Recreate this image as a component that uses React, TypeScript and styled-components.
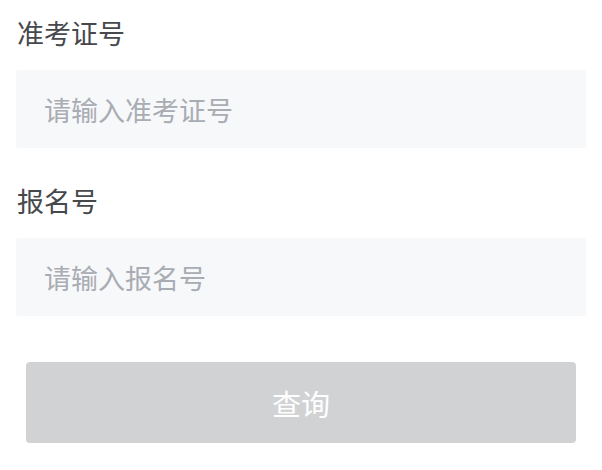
import styled, { createGlobalStyle } from "styled-components";

const GlobalStyle = createGlobalStyle`
  body {
    margin: 0;
    background: #ffffff;
    font-family: "Noto Sans CJK SC", "Noto Sans", sans-serif;
  }
`;

export default function App() {
  return (
    <>
      <GlobalStyle />
      <Form>
        <Field>
          <Label>准考证号</Label>
          <Input placeholder="请输入准考证号" />
        </Field>
        <Field>
          <Label>报名号</Label>
          <Input placeholder="请输入报名号" />
        </Field>
        <Button disabled>查询</Button>
      </Form>
    </>
  );
}

const Form = styled.div`
  display: flex;
  flex-direction: column;
  padding: 18px 16px 0;
`;

const Field = styled.div`
  display: flex;
  flex-direction: column;
  margin-bottom: 38px;
`;

const Label = styled.label`
  font-size: 27px;
  line-height: 30px;
  color: #46484c;
  padding-left: 1px;
`;

const Input = styled.input`
  box-sizing: border-box;
  margin-top: 22px;
  height: 78px;
  width: 100%;
  padding: 0 28px;
  border: none;
  outline: none;
  border-radius: 2px;
  background: #f7f8fa;
  font-family: inherit;
  font-size: 27px;
  color: #3c3e42;

  &::placeholder {
    color: #a9acb3;
  }
`;

const Button = styled.button`
  margin: 8px 10px 0;
  height: 81px;
  border: none;
  border-radius: 4px;
  background: #d1d2d4;
  color: #ffffff;
  font-family: inherit;
  font-size: 29px;
`;
